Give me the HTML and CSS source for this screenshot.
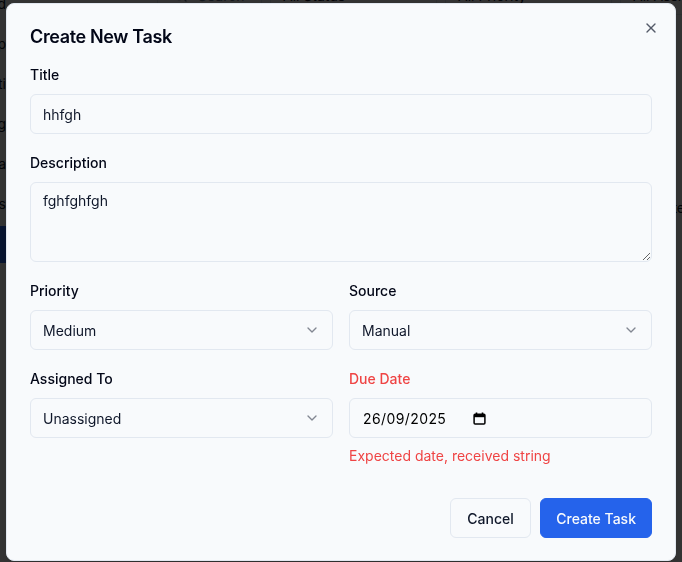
FILE: index.html
```html
<!DOCTYPE html>
<html lang="en">
<head>
<meta charset="utf-8">
<title>Create New Task</title>
<link rel="stylesheet" href="styles.css">
</head>
<body>
<div class="page">
  <aside class="sidebar">
    <div class="nav-item">Dashboard</div>
    <div class="nav-item">Roadmap</div>
    <div class="nav-item">Multi</div>
    <div class="nav-item">Catalog</div>
    <div class="nav-item">Organiza</div>
    <div class="nav-item">Tasks</div>
    <div class="nav-active"></div>
  </aside>
  <main class="main">
    <div class="filters">
      <div class="search">
        <svg width="16" height="16" viewBox="0 0 24 24" fill="none" stroke="currentColor" stroke-width="2" stroke-linecap="round" stroke-linejoin="round"><circle cx="11" cy="11" r="8"/><path d="m21 21-4.3-4.3"/></svg>
        <span>Search</span>
      </div>
      <div class="filter">All Status</div>
      <div class="filter">All Priority</div>
      <div class="filter">All Assignees</div>
    </div>
    <div class="main-row"><span>Due Date</span></div>
  </main>
</div>

<div class="overlay">
  <div class="modal" role="dialog" aria-labelledby="dlg-title">
    <button class="close" type="button" aria-label="Close">
      <svg width="16" height="16" viewBox="0 0 24 24" fill="none" stroke="currentColor" stroke-width="2" stroke-linecap="round" stroke-linejoin="round"><path d="M18 6 6 18"/><path d="m6 6 12 12"/></svg>
    </button>
    <h2 class="modal-title" id="dlg-title">Create New Task</h2>
    <form class="form">
      <div class="field">
        <label class="label" for="f-title">Title</label>
        <input class="input" id="f-title" type="text" value="hhfgh">
      </div>
      <div class="field">
        <label class="label" for="f-desc">Description</label>
        <textarea class="input textarea" id="f-desc">fghfghfgh</textarea>
      </div>
      <div class="row">
        <div class="field">
          <span class="label">Priority</span>
          <div class="input select"><span>Medium</span>
            <svg width="16" height="16" viewBox="0 0 24 24" fill="none" stroke="currentColor" stroke-width="2" stroke-linecap="round" stroke-linejoin="round"><path d="m6 9 6 6 6-6"/></svg>
          </div>
        </div>
        <div class="field">
          <span class="label">Source</span>
          <div class="input select"><span>Manual</span>
            <svg width="16" height="16" viewBox="0 0 24 24" fill="none" stroke="currentColor" stroke-width="2" stroke-linecap="round" stroke-linejoin="round"><path d="m6 9 6 6 6-6"/></svg>
          </div>
        </div>
      </div>
      <div class="row">
        <div class="field">
          <span class="label">Assigned To</span>
          <div class="input select"><span>Unassigned</span>
            <svg width="16" height="16" viewBox="0 0 24 24" fill="none" stroke="currentColor" stroke-width="2" stroke-linecap="round" stroke-linejoin="round"><path d="m6 9 6 6 6-6"/></svg>
          </div>
        </div>
        <div class="field">
          <span class="label label-error">Due Date</span>
          <div class="input date"><span class="date-value">26/09/2025</span>
            <svg class="cal" width="13" height="13" viewBox="0 0 13 13"><path d="M3.5 0.5v2M9.5 0.5v2" stroke="#000" stroke-width="1.6"/><rect x="1.1" y="2.2" width="10.8" height="9.9" rx="1" fill="none" stroke="#000" stroke-width="1.5"/><rect x="1" y="2" width="11" height="3.2" fill="#000"/></svg>
          </div>
          <p class="error">Expected date, received string</p>
        </div>
      </div>
      <div class="footer">
        <button class="btn btn-outline" type="button">Cancel</button>
        <button class="btn btn-primary" type="button">Create Task</button>
      </div>
    </form>
  </div>
</div>
</body>
</html>
```

FILE: styles.css
```css
* { box-sizing: border-box; }

html, body {
  margin: 0;
  height: 100%;
}

body {
  font-family: Inter, "Noto Sans", sans-serif;
  color: #0f172a;
  background: #ffffff;
  overflow: hidden;
}

/* ---------- page behind the dialog ---------- */
.page {
  display: flex;
  height: 100vh;
  overflow: hidden;
}

.sidebar {
  width: 6px;
  flex: none;
  overflow: hidden;
  display: flex;
  flex-direction: column;
  align-items: flex-end;
  gap: 20px;
  margin-top: -6px;
  font-size: 14px;
  line-height: 20px;
}

.nav-item {
  white-space: nowrap;
}

.nav-active {
  width: 60px;
  height: 37px;
  margin-top: -8px;
  background: #2563eb;
  flex: none;
}

.main {
  flex: 1;
  min-width: 0;
}

.filters {
  display: flex;
  gap: 8px;
  margin-top: -25px;
  padding-left: 151px;
  font-size: 14px;
  white-space: nowrap;
}

.search,
.filter {
  height: 40px;
  border: 1px solid #e2e8f0;
  border-radius: 6px;
  display: flex;
  align-items: center;
  flex: none;
}

.search {
  width: 105px;
  padding-left: 14px;
  gap: 10px;
  color: #64748b;
}

.filter {
  width: 167px;
  padding-left: 12px;
}

.main-row {
  display: flex;
  justify-content: flex-end;
  margin-top: 183px;
  margin-right: -3px;
  font-size: 14px;
  line-height: 20px;
  white-space: nowrap;
}

/* ---------- dialog ---------- */
.overlay {
  position: fixed;
  inset: 0;
  background: rgba(0, 0, 0, 0.8);
  display: flex;
  justify-content: center;
  align-items: flex-start;
  padding-top: 3px;
}

.modal {
  position: relative;
  width: 670px;
  background: #f8fafc;
  border: 1px solid #e2e8f0;
  border-radius: 8px;
  padding: 24px 23px 22px;
  box-shadow: 0 10px 15px -3px rgba(0, 0, 0, 0.1);
}

.close {
  position: absolute;
  top: 16px;
  right: 16px;
  width: 16px;
  height: 16px;
  padding: 0;
  border: 0;
  background: none;
  color: #0f172a;
  opacity: 0.7;
  display: flex;
}

.modal-title {
  margin: 0 0 19px;
  font-size: 18px;
  font-weight: 600;
  line-height: 18px;
  letter-spacing: -0.02em;
  color: #020617;
}

.form {
  display: flex;
  flex-direction: column;
  gap: 19px;
}

.field {
  display: flex;
  flex-direction: column;
  min-width: 0;
}

.label {
  font-size: 14px;
  font-weight: 500;
  line-height: 20px;
  margin-bottom: 9px;
  color: #020617;
}

.label-error {
  color: #ef4444;
}

.row {
  display: grid;
  grid-template-columns: 1fr 1fr;
  gap: 16px;
}

.input {
  height: 40px;
  width: 100%;
  border: 1px solid #e2e8f0;
  border-radius: 6px;
  background: transparent;
  padding: 0 12px;
  font-family: Inter, "Noto Sans", sans-serif;
  font-size: 14px;
  color: #0f172a;
  outline: none;
}

.textarea {
  height: 80px;
  padding: 8px 12px;
  line-height: 20px;
  resize: vertical;
  display: block;
}

.select {
  display: flex;
  align-items: center;
  justify-content: space-between;
}

.select svg {
  opacity: 0.5;
  flex: none;
}

.date {
  display: flex;
  align-items: center;
  padding-left: 13px;
  color: #000;
}

.date-value {
  letter-spacing: 0.4px;
}

.cal {
  margin-left: 27px;
  flex: none;
}

.error {
  margin: 8px 0 0;
  font-size: 14px;
  line-height: 20px;
  color: #ef4444;
}

.footer {
  display: flex;
  justify-content: flex-end;
  gap: 9px;
  margin-top: 13px;
}

.btn {
  height: 40px;
  border-radius: 6px;
  font-family: Inter, "Noto Sans", sans-serif;
  font-size: 14px;
  font-weight: 500;
  cursor: pointer;
}

.btn-outline {
  padding: 0 16.5px;
  background: #f8fafc;
  border: 1px solid #e2e8f0;
  color: #0f172a;
}

.btn-primary {
  padding: 0 15px;
  background: #2563eb;
  border: 1px solid #2563eb;
  color: #f8fafc;
}
```
